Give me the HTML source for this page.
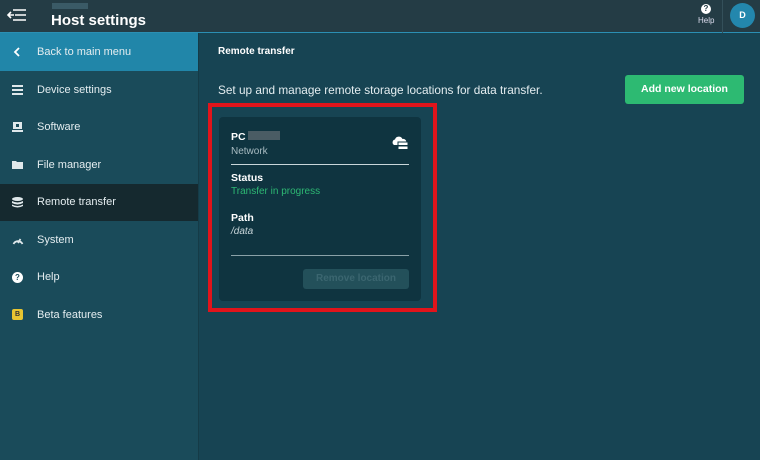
<!DOCTYPE html>
<html><head><style>
*{margin:0;padding:0;box-sizing:border-box}
body{width:760px;height:460px;overflow:hidden;font-family:"Liberation Sans",sans-serif;background:#174453;position:relative;color:#fff}
.hdr{position:absolute;left:0;top:0;width:760px;height:33px;background:#243c45;border-bottom:1px solid #2b8fb3}
.side{position:absolute;left:0;top:33px;width:199px;height:427px;background:#1a4b5a;border-right:1px solid #153b47}
.row{height:37.5px;display:flex;align-items:center;font-size:11px;color:#e4edf0}
.row .ic{width:37px;padding-left:12px;display:flex;align-items:center}
.main{position:absolute;left:200px;top:34px;right:0;bottom:0}
</style></head><body>
<div class="hdr">
 <svg style="position:absolute;left:4px;top:8px" width="24" height="14" viewBox="0 0 24 14" fill="none" stroke="#fff" stroke-width="1.6">
  <path d="M9 2H22M11 7H22M9 12H22M7 4L4 7L7 10M4 7H10"/>
 </svg>
 <div style="position:absolute;left:52px;top:3px;width:36px;height:6px;background:#3a5a66"></div>
 <div style="position:absolute;left:51px;top:12px;font-size:15px;font-weight:bold">Host settings</div>
 <div style="position:absolute;left:689px;top:0;width:34px;height:33px;border-right:1px solid #34505a"></div>
 <div style="position:absolute;left:701px;top:4px;width:10px;height:10px;border-radius:50%;background:#fff;color:#243c45;font-size:8px;font-weight:bold;text-align:center;line-height:10px">?</div>
 <div style="position:absolute;left:698px;top:16px;font-size:8px;color:#dde">Help</div>
 <div style="position:absolute;left:730px;top:3px;width:25px;height:25px;border-radius:50%;background:#2387ad;font-size:9px;font-weight:bold;text-align:center;line-height:25px">D</div>
</div>
<div class="side">
 <div class="row" style="background:#2186a9;height:38px"><span class="ic"><svg width="10" height="10" viewBox="0 0 10 10"><path d="M7 1L3 5L7 9" stroke="#fff" stroke-width="1.8" fill="none"/></svg></span>Back to main menu</div>
 <div class="row"><span class="ic"><svg width="11" height="10" viewBox="0 0 11 10" fill="#dfe8eb"><rect x="0" y="0" width="11" height="2"/><rect x="0" y="4" width="11" height="2"/><rect x="0" y="8" width="11" height="2"/></svg></span>Device settings</div>
 <div class="row"><span class="ic"><svg width="11" height="10" viewBox="0 0 11 10"><rect x="1" y="0" width="9" height="7" fill="#dfe8eb"/><rect x="4" y="2" width="3" height="3" fill="#1a4b5a"/><rect x="0" y="8" width="11" height="2" fill="#dfe8eb"/></svg></span>Software</div>
 <div class="row"><span class="ic"><svg width="11" height="10" viewBox="0 0 11 10" fill="#dfe8eb"><path d="M0 1H4L5 2H11V9H0Z"/></svg></span>File manager</div>
 <div class="row" style="background:#15292f"><span class="ic"><svg width="11" height="11" viewBox="0 0 11 11" fill="#dfe8eb"><ellipse cx="5.5" cy="2" rx="5.5" ry="2"/><path d="M0 4Q5.5 7 11 4V6Q5.5 9 0 6Z"/><path d="M0 7.5Q5.5 10.5 11 7.5V9Q5.5 12 0 9Z"/></svg></span>Remote transfer</div>
 <div class="row"><span class="ic"><svg width="12" height="10" viewBox="0 0 12 10" fill="none" stroke="#dfe8eb" stroke-width="1.8"><path d="M1.5 9A5 5 0 0 1 10.5 9"/><path d="M6 8L8.5 4"/></svg></span>System</div>
 <div class="row"><span class="ic"><span style="display:inline-block;width:11px;height:11px;border-radius:50%;background:#fff;color:#1a4b5a;font-size:8px;font-weight:bold;text-align:center;line-height:11px">?</span></span>Help</div>
 <div class="row"><span class="ic"><span style="display:inline-block;width:11px;height:11px;border-radius:2px;background:#e8c531;color:#333;font-size:7px;font-weight:bold;text-align:center;line-height:11px">B</span></span>Beta features</div>
</div>
<div class="main">
 <div style="position:absolute;left:18px;top:12px;font-size:10px;font-weight:bold">Remote transfer</div>
 <div style="position:absolute;left:18px;top:49px;font-size:11.8px;color:#e4edf0">Set up and manage remote storage locations for data transfer.</div>
 <div style="position:absolute;left:425px;top:41px;width:119px;height:29px;background:#2dba72;border-radius:3px;font-size:10.5px;font-weight:bold;text-align:center;line-height:29px">Add new location</div>
 <div style="position:absolute;left:8px;top:69px;width:229px;height:209px;border:4px solid #e1141b"></div>
 <div style="position:absolute;left:19px;top:83px;width:202px;height:184px;background:#0f3440;border-radius:4px">
  <div style="position:absolute;left:12px;top:14px;font-size:10.5px;font-weight:bold">PC<span style="display:inline-block;width:32px;height:9px;background:#4a5c64;margin-left:2px"></span></div>
  <div style="position:absolute;left:12px;top:29px;font-size:10px;color:#a9bcc2">Network</div>
  <svg style="position:absolute;left:173px;top:18px" width="17" height="16" viewBox="0 0 17 16">
   <path d="M2 10A3 3 0 0 1 3 4.5A4 4 0 0 1 10.5 4A3 3 0 0 1 12 10Z" fill="#fff"/>
   <rect x="6" y="7" width="10" height="3.5" fill="#fff" stroke="#0f3440" stroke-width="1"/>
   <rect x="6" y="11" width="10" height="3.5" fill="#fff" stroke="#0f3440" stroke-width="1"/>
  </svg>
  <div style="position:absolute;left:12px;top:47px;width:178px;height:1px;background:#c9d6da"></div>
  <div style="position:absolute;left:12px;top:55px;font-size:10.5px;font-weight:bold">Status</div>
  <div style="position:absolute;left:12px;top:69px;font-size:10px;color:#2db873">Transfer in progress</div>
  <div style="position:absolute;left:12px;top:95px;font-size:10.5px;font-weight:bold">Path</div>
  <div style="position:absolute;left:12px;top:109px;font-size:10px;font-style:italic;color:#c9d6da">/data</div>
  <div style="position:absolute;left:12px;top:138px;width:178px;height:1px;background:#8aa1a8"></div>
  <div style="position:absolute;left:84px;top:152px;width:106px;height:20px;background:#23505a;border-radius:3px;font-size:10px;font-weight:bold;color:#3b6670;text-align:center;line-height:20px">Remove location</div>
 </div>
</div>
</body></html>
